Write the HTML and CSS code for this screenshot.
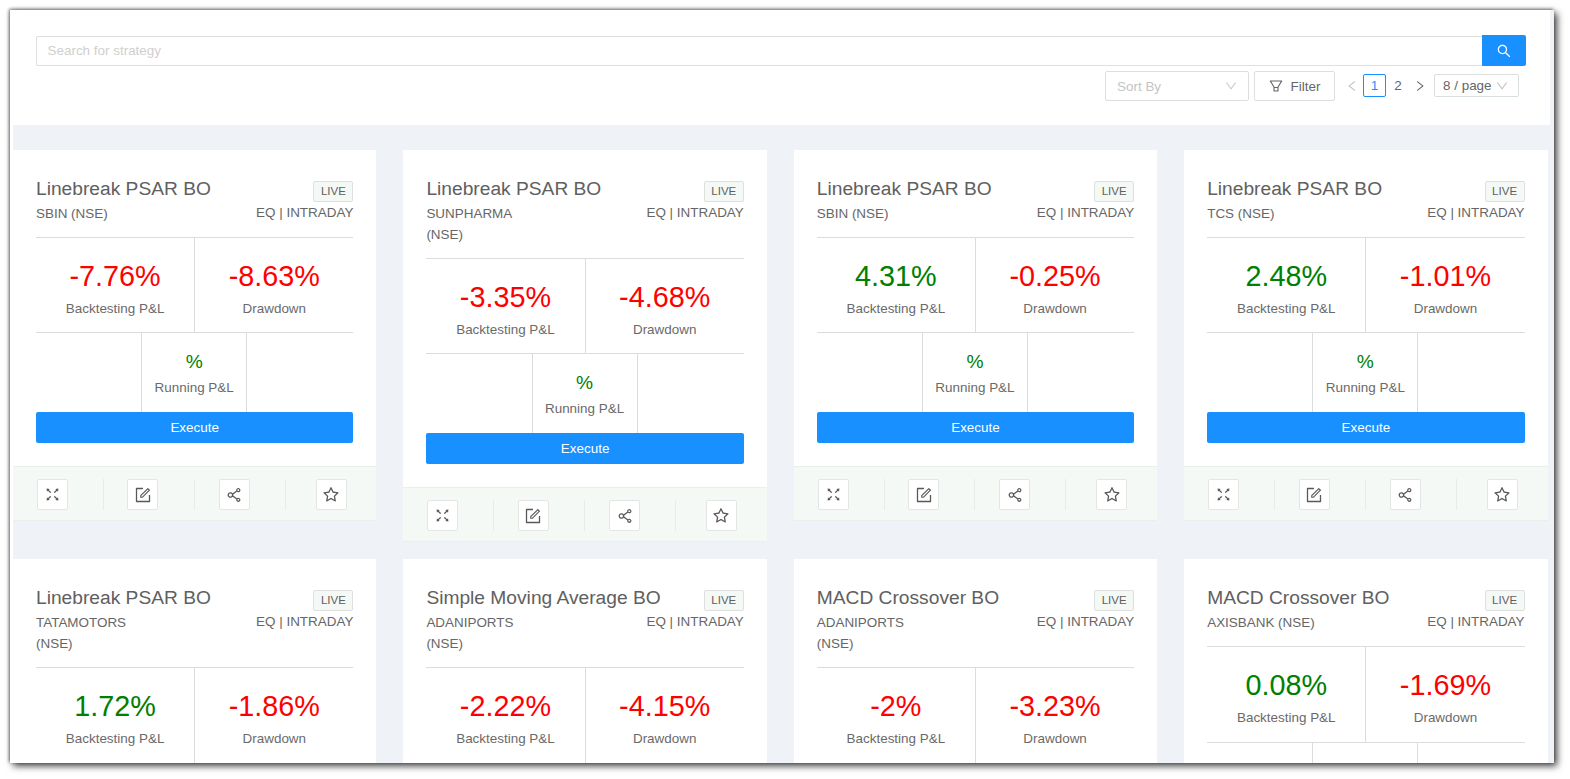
FILE: index.html
```html
<!DOCTYPE html>
<html lang="en">
<head>
<meta charset="utf-8">
<title>Strategies</title>
<link rel="stylesheet" href="styles.css">
</head>
<body>
<svg class="sprite" xmlns="http://www.w3.org/2000/svg">
  <symbol id="i-search" viewBox="64 64 896 896"><path d="M909.6 854.5L649.9 594.8C690.2 542.7 712 479 712 412c0-80.2-31.3-155.4-87.9-212.1-56.6-56.7-132-87.9-212.1-87.9s-155.5 31.3-212.1 87.9C143.2 256.5 112 331.8 112 412c0 80.1 31.3 155.5 87.9 212.1C256.5 680.8 331.8 712 412 712c67 0 130.6-21.8 182.7-62l259.7 259.6a8.2 8.2 0 0 0 11.6 0l43.6-43.5a8.2 8.2 0 0 0 0-11.6zM570.4 570.4C528 612.7 471.8 636 412 636s-116-23.3-158.4-65.6C211.3 528 188 471.8 188 412s23.3-116.1 65.6-158.4C296 211.3 352.2 188 412 188s116.1 23.2 158.4 65.6S636 352.2 636 412s-23.3 116.1-65.6 158.4z"/></symbol>
  <symbol id="i-filter" viewBox="64 64 896 896"><path d="M880.1 154H143.9c-24.5 0-39.8 26.7-27.5 48L349 597.4V838c0 17.7 14.2 32 31.8 32h262.4c17.6 0 31.8-14.3 31.8-32V597.4L907.7 202c12.2-21.3-3.1-48-27.6-48zM603.4 798H420.6V642h182.9v156zm9.6-236.6l-9.5 16.6h-183l-9.5-16.6L212.7 226h598.6L613 561.4z"/></symbol>
  <symbol id="i-left" viewBox="64 64 896 896"><path d="M724 218.3V141c0-6.7-7.7-10.4-12.9-6.3L260.3 486.8a31.86 31.86 0 0 0 0 50.3l450.8 352.1c5.3 4.1 12.9.4 12.9-6.3v-77.3c0-4.9-2.3-9.6-6.1-12.6l-360-281 360-281.1c3.8-3 6.1-7.7 6.1-12.6z"/></symbol>
  <symbol id="i-right" viewBox="64 64 896 896"><path d="M765.7 486.8L314.9 134.7A7.97 7.97 0 0 0 302 141v77.3c0 4.9 2.3 9.6 6.1 12.6l360 281.1-360 281.1c-3.9 3-6.1 7.7-6.1 12.6V883c0 6.7 7.7 10.4 12.9 6.3l450.8-352.1a31.96 31.96 0 0 0 0-50.4z"/></symbol>
  <symbol id="i-down" viewBox="64 64 896 896"><path d="M884 256h-75c-5.1 0-9.9 2.5-12.9 6.6L512 654.2 227.9 262.6c-3-4.1-7.8-6.6-12.9-6.6h-75c-6.5 0-10.3 7.4-6.5 12.7l352.6 486.1c12.8 17.6 39 17.6 51.7 0l352.6-486.1c3.9-5.3.1-12.7-6.4-12.7z"/></symbol>
  <symbol id="i-expand" viewBox="64 64 896 896"><path d="M290 236.4l43.9-43.9a8.01 8.01 0 0 0-4.7-13.6L169 160c-5.1-.6-9.5 3.7-8.9 8.9L179 329.1c.8 6.6 8.9 9.4 13.6 4.7l43.7-43.7L370 423.7c3.1 3.1 8.2 3.1 11.3 0l42.4-42.3c3.1-3.1 3.1-8.2 0-11.3L290 236.4zm352.7 187.3c3.1 3.1 8.2 3.1 11.3 0l133.7-133.6 43.7 43.7a8.01 8.01 0 0 0 13.6-4.7L863.9 169c.6-5.1-3.7-9.5-8.9-8.9L694.8 179c-6.6.8-9.4 8.9-4.7 13.6l43.9 43.9L600.3 370a8.03 8.03 0 0 0 0 11.3l42.4 42.4zM845 694.9c-.8-6.6-8.9-9.4-13.6-4.7l-43.7 43.7L654 600.3a8.03 8.03 0 0 0-11.3 0l-42.4 42.3a8.03 8.03 0 0 0 0 11.3L734 787.6l-43.9 43.9a8.01 8.01 0 0 0 4.7 13.6L855 864c5.1.6 9.5-3.7 8.9-8.9L845 694.9zm-463.7-94.6a8.03 8.03 0 0 0-11.3 0L236.3 733.9l-43.7-43.7a8.01 8.01 0 0 0-13.6 4.7L160.1 855c-.6 5.1 3.7 9.5 8.9 8.9L329.2 845c6.6-.8 9.4-8.9 4.7-13.6L290 787.6 423.7 654c3.1-3.1 3.1-8.2 0-11.3l-42.4-42.4z"/></symbol>
  <symbol id="i-form" viewBox="64 64 896 896"><path d="M904 512h-56c-4.4 0-8 3.6-8 8v320H184V184h320c4.4 0 8-3.6 8-8v-56c0-4.4-3.6-8-8-8H144c-17.7 0-32 14.3-32 32v736c0 17.7 14.3 32 32 32h736c17.7 0 32-14.3 32-32V520c0-4.4-3.6-8-8-8z"/><path d="M355.9 534.9L354 653.8c-.1 8.9 7.1 16.2 16 16.2h.4l118-2.9c2-.1 4-.9 5.4-2.3l415.9-415c3.1-3.1 3.1-8.2 0-11.3L785.4 114.3c-1.6-1.6-3.6-2.3-5.7-2.3s-4.1.8-5.7 2.3l-415.8 415a8.3 8.3 0 0 0-2.3 5.6zm63.5 23.6L779.7 199l45.2 45.1-360.5 359.7-45.7 1.1.7-46.4z"/></symbol>
  <symbol id="i-share" viewBox="64 64 896 896"><path d="M752 664c-28.5 0-54.8 10-75.4 26.7L469.4 540.8a160.68 160.68 0 0 0 0-57.6l207.2-149.9C697.2 350 723.5 360 752 360c66.2 0 120-53.8 120-120s-53.8-120-120-120-120 53.8-120 120c0 11.6 1.6 22.7 4.7 33.3L439.9 415.8C410.7 377.1 364.3 352 312 352c-88.4 0-160 71.6-160 160s71.6 160 160 160c52.3 0 98.7-25.1 127.9-63.8l196.8 142.5c-3.1 10.6-4.7 21.8-4.7 33.3 0 66.2 53.8 120 120 120s120-53.8 120-120-53.8-120-120-120zm0-476c28.7 0 52 23.3 52 52s-23.3 52-52 52-52-23.3-52-52 23.3-52 52-52zM312 600c-48.5 0-88-39.5-88-88s39.5-88 88-88 88 39.5 88 88-39.5 88-88 88zm440 236c-28.7 0-52-23.3-52-52s23.3-52 52-52 52 23.3 52 52-23.3 52-52 52z"/></symbol>
  <symbol id="i-star" viewBox="64 64 896 896"><path d="M908.1 353.1l-253.9-36.9L540.7 86.1c-3.1-6.3-8.2-11.4-14.5-14.5-15.8-7.8-35-1.3-42.9 14.5L369.8 316.2l-253.9 36.9c-7 1-13.4 4.3-18.3 9.3a32.05 32.05 0 0 0 .6 45.3l183.7 179.1-43.4 252.9a31.95 31.95 0 0 0 46.4 33.7L512 754l227.1 119.4c6.2 3.3 13.4 4.4 20.3 3.2 17.4-3 29.1-19.5 26.1-36.9l-43.4-252.9 183.7-179.1c5-4.9 8.3-11.3 9.3-18.3 2.7-17.5-9.5-33.7-27-36.3zM664.8 561.6l36.1 210.3L512 672.7 323.1 772l36.1-210.3-152.8-149L417.6 382 512 190.7 606.4 382l211.2 30.7-152.8 148.9z"/></symbol>
</svg>
<div class="window">
  <div class="page">
    <header class="top">
      <div class="search-row">
        <input class="search-input" type="text" placeholder="Search for strategy">
        <button class="search-btn" type="button"><svg class="ic ic-14"><use href="#i-search"/></svg></button>
      </div>
      <div class="tools-row">
        <div class="sort"><span>Sort By</span><svg class="ic ic-12"><use href="#i-down"/></svg></div>
        <button class="filter" type="button"><svg class="ic ic-14"><use href="#i-filter"/></svg><span>Filter</span></button>
        <nav class="pager">
          <svg class="ic ic-12 pg-prev"><use href="#i-left"/></svg>
          <span class="pg-num pg-on">1</span>
          <span class="pg-num">2</span>
          <svg class="ic ic-12 pg-next"><use href="#i-right"/></svg>
          <div class="pg-size"><span>8 / page</span><svg class="ic ic-12"><use href="#i-down"/></svg></div>
        </nav>
      </div>
    </header>
    <main class="grid">

      <article class="card">
        <div class="body">
          <div class="head"><h3 class="title">Linebreak PSAR BO</h3><span class="tag">LIVE</span></div>
          <div class="sub"><span class="sym">SBIN (NSE)</span><span class="kind">EQ | INTRADAY</span></div>
          <div class="metrics">
            <div class="m"><div class="val neg">-7.76%</div><div class="lab">Backtesting P&amp;L</div></div>
            <div class="m"><div class="val neg">-8.63%</div><div class="lab">Drawdown</div></div>
          </div>
          <div class="running"><div class="run"><div class="val-s pos">%</div><div class="lab">Running P&amp;L</div></div></div>
          <button class="exec" type="button">Execute</button>
        </div>
        <div class="actions">
          <div class="act"><span class="ib"><svg class="ic ic-15"><use href="#i-expand"/></svg></span></div>
          <div class="act"><span class="ib"><svg class="ic ic-16"><use href="#i-form"/></svg></span></div>
          <div class="act"><span class="ib"><svg class="ic ic-16"><use href="#i-share"/></svg></span></div>
          <div class="act"><span class="ib"><svg class="ic ic-16"><use href="#i-star"/></svg></span></div>
        </div>
      </article>

      <article class="card">
        <div class="body">
          <div class="head"><h3 class="title">Linebreak PSAR BO</h3><span class="tag">LIVE</span></div>
          <div class="sub"><span class="sym">SUNPHARMA (NSE)</span><span class="kind">EQ | INTRADAY</span></div>
          <div class="metrics">
            <div class="m"><div class="val neg">-3.35%</div><div class="lab">Backtesting P&amp;L</div></div>
            <div class="m"><div class="val neg">-4.68%</div><div class="lab">Drawdown</div></div>
          </div>
          <div class="running"><div class="run"><div class="val-s pos">%</div><div class="lab">Running P&amp;L</div></div></div>
          <button class="exec" type="button">Execute</button>
        </div>
        <div class="actions">
          <div class="act"><span class="ib"><svg class="ic ic-15"><use href="#i-expand"/></svg></span></div>
          <div class="act"><span class="ib"><svg class="ic ic-16"><use href="#i-form"/></svg></span></div>
          <div class="act"><span class="ib"><svg class="ic ic-16"><use href="#i-share"/></svg></span></div>
          <div class="act"><span class="ib"><svg class="ic ic-16"><use href="#i-star"/></svg></span></div>
        </div>
      </article>

      <article class="card">
        <div class="body">
          <div class="head"><h3 class="title">Linebreak PSAR BO</h3><span class="tag">LIVE</span></div>
          <div class="sub"><span class="sym">SBIN (NSE)</span><span class="kind">EQ | INTRADAY</span></div>
          <div class="metrics">
            <div class="m"><div class="val pos">4.31%</div><div class="lab">Backtesting P&amp;L</div></div>
            <div class="m"><div class="val neg">-0.25%</div><div class="lab">Drawdown</div></div>
          </div>
          <div class="running"><div class="run"><div class="val-s pos">%</div><div class="lab">Running P&amp;L</div></div></div>
          <button class="exec" type="button">Execute</button>
        </div>
        <div class="actions">
          <div class="act"><span class="ib"><svg class="ic ic-15"><use href="#i-expand"/></svg></span></div>
          <div class="act"><span class="ib"><svg class="ic ic-16"><use href="#i-form"/></svg></span></div>
          <div class="act"><span class="ib"><svg class="ic ic-16"><use href="#i-share"/></svg></span></div>
          <div class="act"><span class="ib"><svg class="ic ic-16"><use href="#i-star"/></svg></span></div>
        </div>
      </article>

      <article class="card">
        <div class="body">
          <div class="head"><h3 class="title">Linebreak PSAR BO</h3><span class="tag">LIVE</span></div>
          <div class="sub"><span class="sym">TCS (NSE)</span><span class="kind">EQ | INTRADAY</span></div>
          <div class="metrics">
            <div class="m"><div class="val pos">2.48%</div><div class="lab">Backtesting P&amp;L</div></div>
            <div class="m"><div class="val neg">-1.01%</div><div class="lab">Drawdown</div></div>
          </div>
          <div class="running"><div class="run"><div class="val-s pos">%</div><div class="lab">Running P&amp;L</div></div></div>
          <button class="exec" type="button">Execute</button>
        </div>
        <div class="actions">
          <div class="act"><span class="ib"><svg class="ic ic-15"><use href="#i-expand"/></svg></span></div>
          <div class="act"><span class="ib"><svg class="ic ic-16"><use href="#i-form"/></svg></span></div>
          <div class="act"><span class="ib"><svg class="ic ic-16"><use href="#i-share"/></svg></span></div>
          <div class="act"><span class="ib"><svg class="ic ic-16"><use href="#i-star"/></svg></span></div>
        </div>
      </article>

      <article class="card">
        <div class="body">
          <div class="head"><h3 class="title">Linebreak PSAR BO</h3><span class="tag">LIVE</span></div>
          <div class="sub"><span class="sym">TATAMOTORS (NSE)</span><span class="kind">EQ | INTRADAY</span></div>
          <div class="metrics">
            <div class="m"><div class="val pos">1.72%</div><div class="lab">Backtesting P&amp;L</div></div>
            <div class="m"><div class="val neg">-1.86%</div><div class="lab">Drawdown</div></div>
          </div>
        </div>
      </article>

      <article class="card">
        <div class="body">
          <div class="head"><h3 class="title">Simple Moving Average BO</h3><span class="tag">LIVE</span></div>
          <div class="sub"><span class="sym">ADANIPORTS (NSE)</span><span class="kind">EQ | INTRADAY</span></div>
          <div class="metrics">
            <div class="m"><div class="val neg">-2.22%</div><div class="lab">Backtesting P&amp;L</div></div>
            <div class="m"><div class="val neg">-4.15%</div><div class="lab">Drawdown</div></div>
          </div>
        </div>
      </article>

      <article class="card">
        <div class="body">
          <div class="head"><h3 class="title">MACD Crossover BO</h3><span class="tag">LIVE</span></div>
          <div class="sub"><span class="sym">ADANIPORTS (NSE)</span><span class="kind">EQ | INTRADAY</span></div>
          <div class="metrics">
            <div class="m"><div class="val neg">-2%</div><div class="lab">Backtesting P&amp;L</div></div>
            <div class="m"><div class="val neg">-3.23%</div><div class="lab">Drawdown</div></div>
          </div>
        </div>
      </article>

      <article class="card">
        <div class="body">
          <div class="head"><h3 class="title">MACD Crossover BO</h3><span class="tag">LIVE</span></div>
          <div class="sub"><span class="sym">AXISBANK (NSE)</span><span class="kind">EQ | INTRADAY</span></div>
          <div class="metrics">
            <div class="m"><div class="val pos">0.08%</div><div class="lab">Backtesting P&amp;L</div></div>
            <div class="m"><div class="val neg">-1.69%</div><div class="lab">Drawdown</div></div>
          </div>
          <div class="running"><div class="run"></div></div>
        </div>
      </article>

    </main>
  </div>
</div>
</body>
</html>
```

FILE: styles.css
```css
* { box-sizing: border-box; }

html, body { margin: 0; padding: 0; background: #fff; }

body {
  height: 779px;
  overflow: hidden;
  font-family: "Liberation Sans", Arial, sans-serif;
  font-size: 13.44px;
  color: #666;
}

.sprite { display: none; }

.window {
  margin: 10px 16px 0 10px;
  height: 753px;
  padding-left: 3px;
  background: #fff;
  box-shadow: 3px 3px 7px rgba(0, 0, 0, 0.75), -1px -1px 3px rgba(0, 0, 0, 0.5);
  overflow: hidden;
}

.page {
  height: 100%;
  background: #eff2f6;
  overflow: hidden;
}

.ic { display: block; fill: currentColor; flex: none; }
.ic-12 { width: 12px; height: 12px; }
.ic-14 { width: 14px; height: 14px; }
.ic-15 { width: 15px; height: 15px; }
.ic-16 { width: 16px; height: 16px; }

.top {
  height: 115px;
  padding: 25px 0 0 23px;
  margin-right: 4px;
  background: #fff;
}

.search-row {
  display: flex;
  align-items: flex-start;
  height: 31px;
  margin-right: 24px;
}

.search-input {
  flex: 1;
  height: 30px;
  margin-top: 1px;
  padding: 0 11px 1px 10.5px;
  border: 1px solid #dde0dd;
  border-right: 0;
  border-radius: 2px 0 0 2px;
  font: 13.44px "Liberation Sans", Arial, sans-serif;
  color: #666;
  outline: 0;
}

.search-input::placeholder { color: #cfcfcf; opacity: 1; }

.search-btn {
  width: 44px;
  height: 31px;
  display: flex;
  align-items: center;
  justify-content: center;
  border: 0;
  padding: 0;
  border-radius: 0 2px 2px 0;
  background: #1890ff;
  color: #fff;
}

.tools-row {
  display: flex;
  justify-content: flex-end;
  align-items: center;
  height: 30px;
  margin-top: 5px;
  padding-right: 31px;
}

.sort {
  width: 144px;
  height: 30px;
  padding: 0 11px;
  display: flex;
  align-items: center;
  justify-content: space-between;
  border: 1px solid #dedede;
  border-radius: 2px;
  color: #c4c4c4;
}

.sort .ic { color: #c8c8c8; }

.filter {
  width: 81px;
  height: 30px;
  margin-left: 5px;
  display: flex;
  align-items: center;
  justify-content: center;
  gap: 8px;
  padding: 0;
  background: #fff;
  border: 1px solid #dedede;
  border-radius: 2px;
  font: 13.44px "Liberation Sans", Arial, sans-serif;
  color: #666;
}

.pager { display: flex; align-items: center; margin: -1px 0 0 11px; }

.pg-prev { color: #bfbfbf; margin-right: 5px; }
.pg-next { color: #666; margin: 0 8px 0 4px; }

.pg-num {
  width: 23px;
  height: 23px;
  line-height: 21px;
  text-align: center;
  border: 1px solid transparent;
  border-radius: 2px;
}

.pg-on { color: #1890ff; border-color: #1890ff; }
.pg-on + .pg-num { width: 24px; }

.pg-size {
  width: 85px;
  height: 23px;
  padding: 0 10px 0 8px;
  display: flex;
  align-items: center;
  justify-content: space-between;
  border: 1px solid #d9e0d9;
  border-radius: 2px;
}

.pg-size .ic { color: #bfbfbf; }

.grid {
  display: grid;
  grid-template-columns: repeat(4, 363.4px);
  column-gap: 27px;
  row-gap: 16.8px;
  align-items: start;
  padding-top: 25px;
}

.card { background: #fff; }

.body { padding: 25px 23px 23px; }

.head {
  display: flex;
  justify-content: space-between;
  align-items: flex-start;
}

.title {
  margin: 0;
  font-size: 19.2px;
  font-weight: 400;
  line-height: 28px;
  color: #606060;
}

.tag {
  margin-top: 6px;
  height: 21px;
  padding: 0 6.5px;
  line-height: 19px;
  font-size: 11.52px;
  color: #606060;
  background: #f5f9f6;
  border: 1px solid #dde0dd;
  border-radius: 2px;
}

.sub {
  display: flex;
  justify-content: space-between;
  align-items: flex-start;
  padding-bottom: 13px;
  border-bottom: 1px solid #dcdcdc;
  line-height: 21px;
}

.sym { width: 116px; }

.kind { margin-top: -1px; }

.metrics {
  display: grid;
  grid-template-columns: 158.2px 1fr;
  height: 95.4px;
  border-bottom: 1px solid #dcdcdc;
}

.m { padding-top: 19px; text-align: center; }
.m + .m { border-left: 1px solid #dcdcdc; }

.val { font-size: 28.8px; line-height: 38px; }
.val-s { font-size: 19.2px; line-height: 28px; }
.pos { color: #008000; }
.neg { color: #ff0000; }
.lab { margin-top: 4px; line-height: 20px; color: #6a6a6a; }

.running { display: flex; justify-content: center; padding-right: 1px; }

.run {
  width: 106px;
  height: 79px;
  padding-top: 15px;
  text-align: center;
  border-left: 1px solid #dcdcdc;
  border-right: 1px solid #dcdcdc;
}

.run .lab { margin-top: 2px; }

.exec {
  display: block;
  width: 100%;
  height: 31px;
  border: 0;
  padding: 0;
  border-radius: 2px;
  background: #1890ff;
  color: #fff;
  font: 13.44px "Liberation Sans", Arial, sans-serif;
}

.actions {
  display: grid;
  grid-template-columns: repeat(4, 1fr);
  height: 55px;
  padding: 12px 0;
  background: #f5f9f6;
  border-top: 1px solid #ebefec;
  border-bottom: 1px solid #ebefec;
}

.act { padding-left: 24px; border-right: 1px solid #e8ece9; }
.act:nth-child(2) { padding-left: 23.5px; }
.act:last-child { padding-left: 30px; border-right: 0; }

.ib {
  width: 31px;
  height: 31px;
  display: flex;
  align-items: center;
  justify-content: center;
  background: #fff;
  border: 1px solid #e4e6e4;
  border-radius: 2px;
  color: #595959;
}
```
